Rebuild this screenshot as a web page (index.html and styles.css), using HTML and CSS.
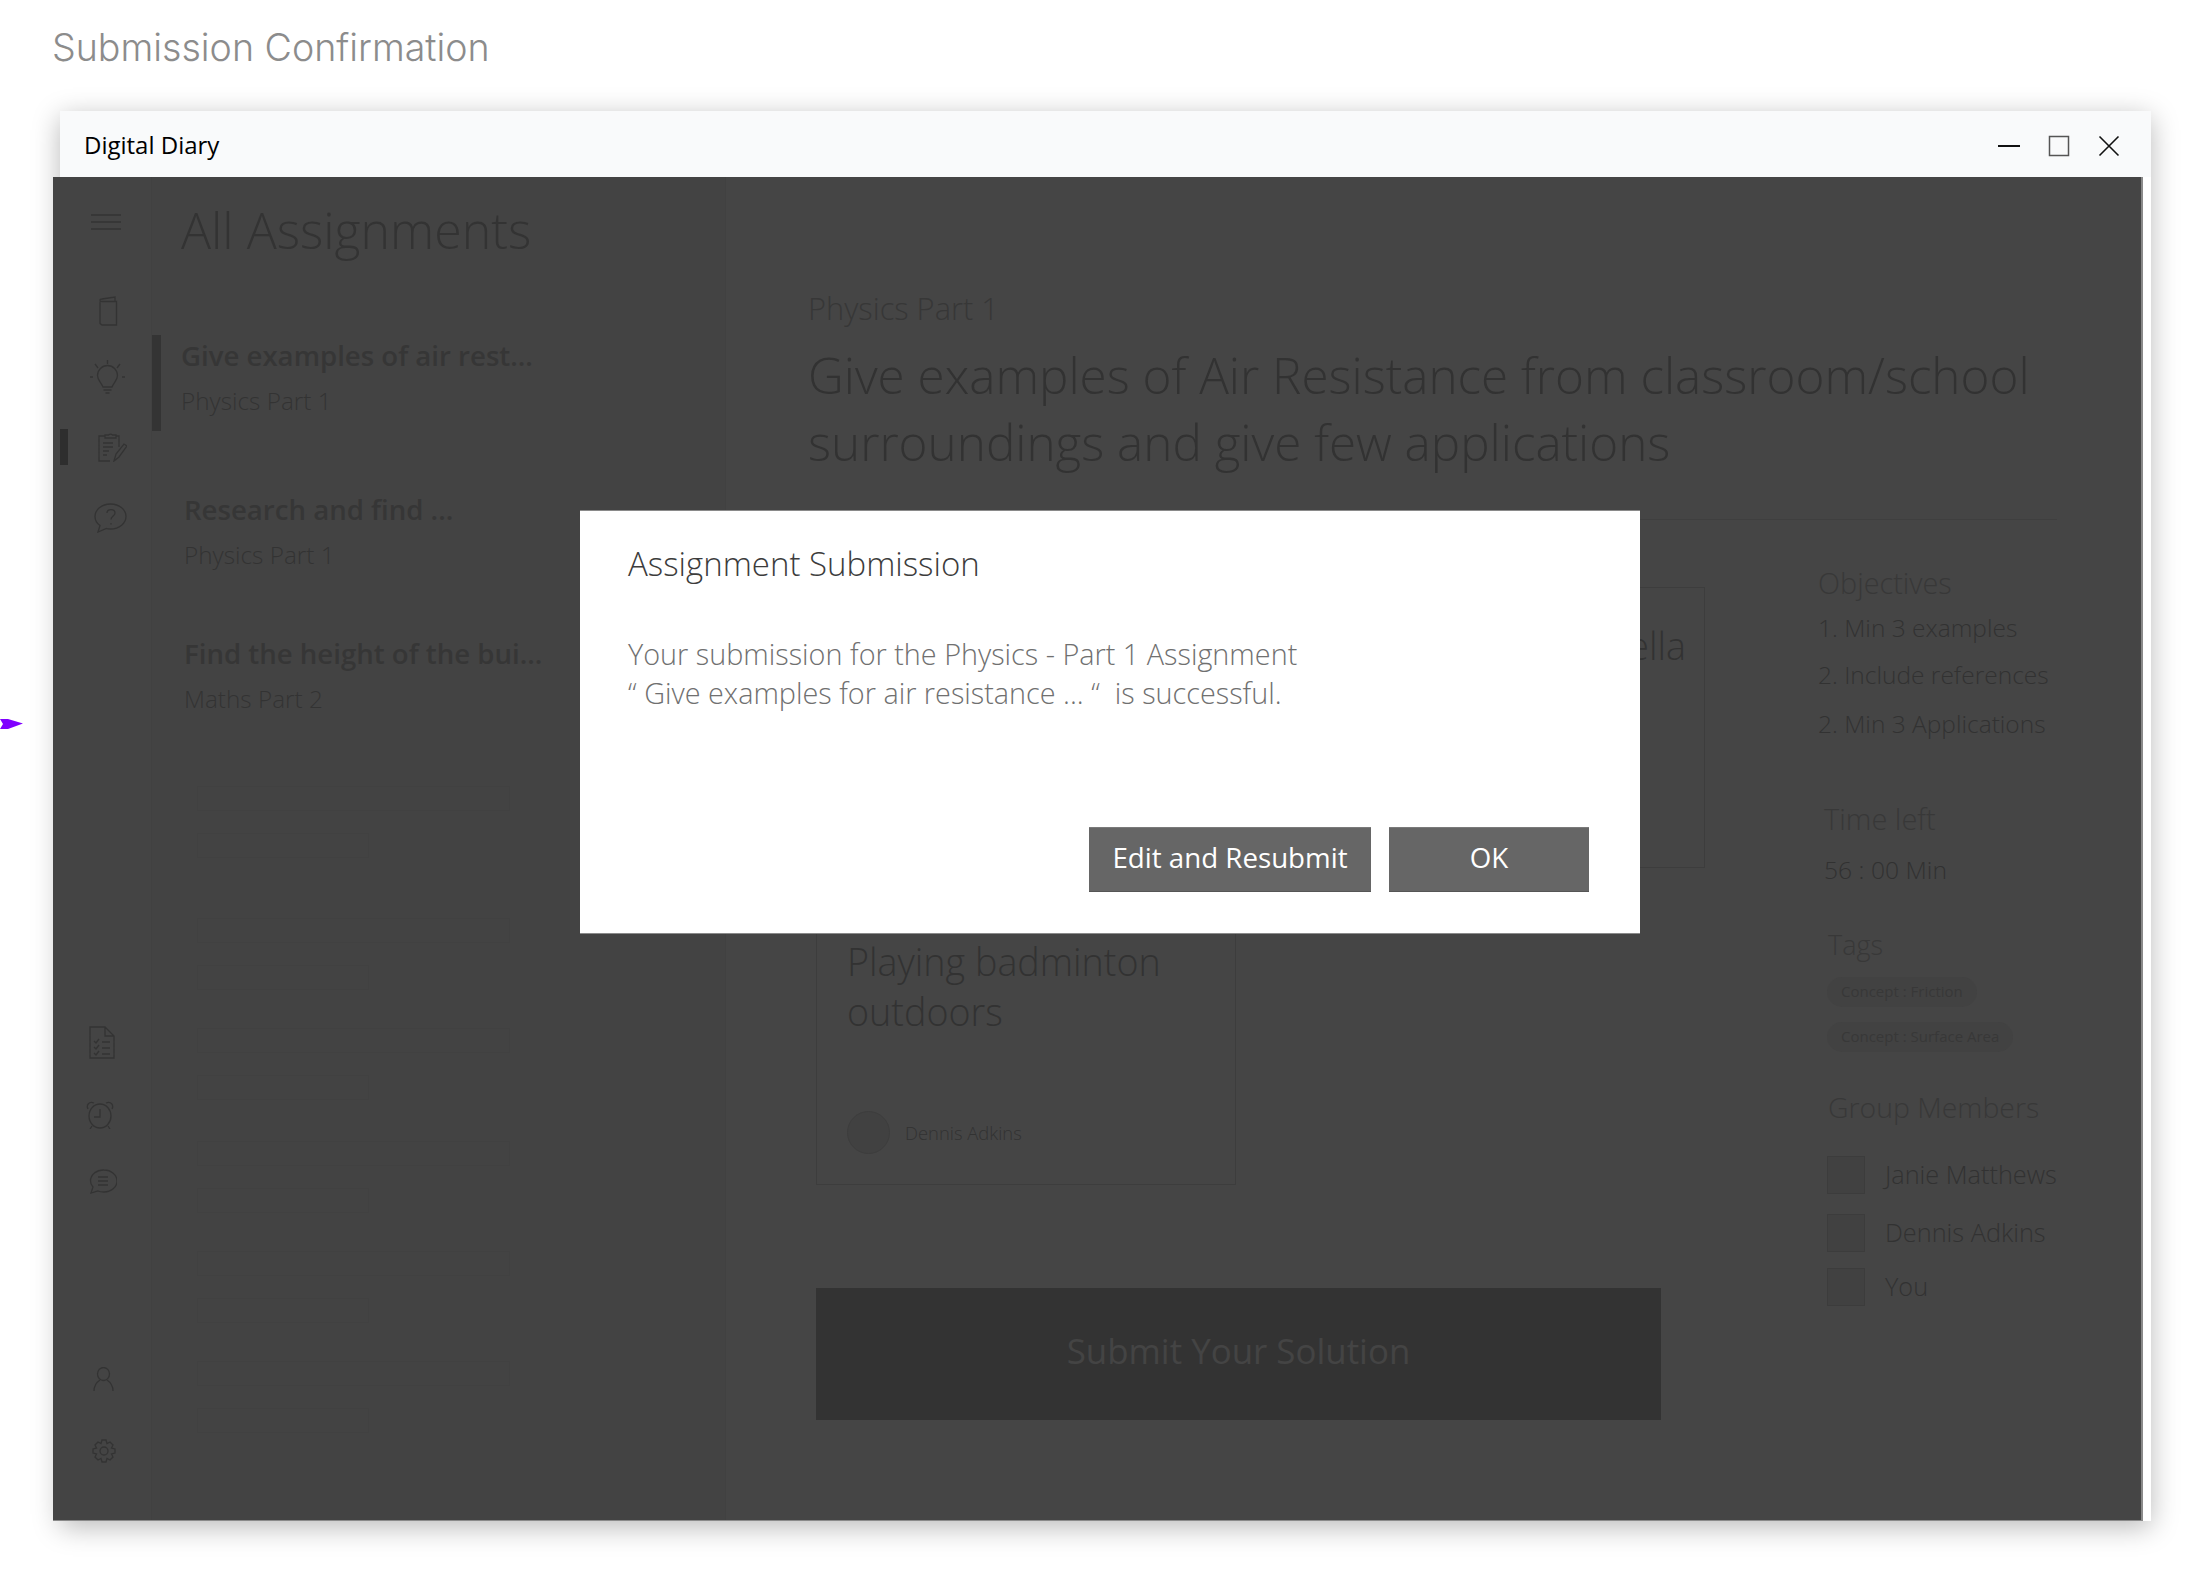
FILE: index.html
```html
<!DOCTYPE html>
<html lang="en">
<head>
<meta charset="utf-8">
<title>Submission Confirmation</title>
<link rel="stylesheet" href="styles.css">
</head>
<body>
<svg class="pointer" viewBox="0 0 23 12"><path d="M0 1 L8 1 L23 5.5 L8 11 L0 11 L3 6 Z"/></svg>
<h1 class="page-title">Submission Confirmation</h1>
<div class="window">
  <header class="titlebar">
    <span class="app-name">Digital Diary</span>
    <div class="controls">
      <svg class="ctl" viewBox="0 0 22 22"><path d="M0 11H22" stroke-width="2"/></svg>
      <svg class="ctl" viewBox="0 0 22 22"><rect x="1.5" y="1.5" width="19" height="19" stroke="#555" stroke-width="1.5"/></svg>
      <svg class="ctl" viewBox="0 0 22 22"><path d="M1.5 1.5L20.5 20.5M20.5 1.5L1.5 20.5" stroke-width="1.6"/></svg>
    </div>
  </header>
  <div class="stage">
    <nav class="rail">
      <svg class="ni ni-ham" viewBox="0 0 30 16"><path d="M0 1H30M0 8H30M0 15H30"/></svg>
      <svg class="ni ni-book" viewBox="0 0 20 30"><path d="M2 5.5V27.5L4 29H18.5V5.5H4C1.5 5.5 1 3 4 3L17 1V5.5"/></svg>
      <svg class="ni ni-bulb" viewBox="0 0 35 35"><path d="M17.5 0V4M5 4L8 8M30 4L27 8M0 17H3M32 17H35M13 27C11 22 7.5 20 7.5 15.5A10 10 0 0 1 27.5 15.5C27.500 20 24 22 22 27ZM13.500 30H21.500M15.500 33H19.500"/></svg>
      <div class="ni-active-wrap">
        <span class="active-mark"></span>
        <svg class="ni ni-clip" viewBox="0 0 29 30"><path d="M7 4H1V29H12M18 4H21V15M7 6V3H10.500A3 3 0 0 1 14.500 3H18V6ZM5 11H15M5 15H15M5 19H11M5 23H9M16 29L18 22L26 12L29 14L21 25Z"/></svg>
      </div>
      <svg class="ni ni-help" viewBox="0 0 33 30"><path d="M16.500 1C7.500 1 1 7 1 13.500C1 17.500 3 20.500 6 22.500L4 29L12.500 25.500C14 26 15 26 16.500 26C25.500 26 32 20 32 13.500C32 7 25.500 1 16.500 1ZM13 10C13 5.500 21 5.500 21 10C21 13 17 13 17 16.500M17 20V21.500"/></svg>
      <svg class="ni ni-doc" viewBox="0 0 26 33"><path d="M1 32V1H16L25 10V32ZM16 1V10H25M5 15L7 17L10 13M13 16H21M5 21L7 23L10 19M13 22H21M5 27L7 29L10 25M13 28H21"/></svg>
      <svg class="ni ni-alarm" viewBox="0 0 28 28"><ellipse cx="14" cy="15" rx="11" ry="12"/><path d="M14 8V16H8M2 8C0 4 3 0 8 2M26 8C28 4 25 0 20 2M6 25L4 28M22 25L24 28"/></svg>
      <svg class="ni ni-chat" viewBox="0 0 28 25"><path d="M15 1A13 11 0 0 1 15 23C12 23 10 22.500 9 22L2 24L4 18C2 16 1.500 14 1.500 12A13 11 0 0 1 15 1ZM9 8H19M9 12H19M9 16H19"/></svg>
      <svg class="ni ni-user" viewBox="0 0 21 24"><ellipse cx="10.500" cy="7" rx="6" ry="6.500"/><path d="M1 24C1 18 4 15 7 13M20 24C20 18 17 15 14 13"/></svg>
      <svg class="ni ni-gear" viewBox="0 0 24 24"><circle cx="12" cy="12" r="4"/><path d="M10 1H14L15 4.500L18 3L21 6L19.500 9L23 10V14L19.500 15L21 18L18 21L15 19.500L14 23H10L9 19.500L6 21L3 18L4.500 15L1 14V10L4.500 9L3 6L6 3L9 4.500Z"/></svg>
    </nav>

    <section class="list">
      <h2 class="list-title">All Assignments</h2>
      <article class="item item-active">
        <h3 class="item-title">Give examples of air rest...</h3>
        <p class="item-sub">Physics Part 1</p>
      </article>
      <article class="item item-two">
        <h3 class="item-title">Research and find ...</h3>
        <p class="item-sub">Physics Part 1</p>
      </article>
      <article class="item item-three">
        <h3 class="item-title">Find the height of the bui...</h3>
        <p class="item-sub">Maths Part 2</p>
      </article>
      <div class="skeletons">
        <div class="skel-pair skel-pair-first"><span class="skel skel-long"></span><span class="skel skel-short"></span></div>
        <div class="skel-pair"><span class="skel skel-long"></span><span class="skel skel-short"></span></div>
        <div class="skel-pair skel-pair-third"><span class="skel skel-long"></span><span class="skel skel-short"></span></div>
        <div class="skel-pair"><span class="skel skel-long"></span><span class="skel skel-short"></span></div>
        <div class="skel-pair"><span class="skel skel-long"></span><span class="skel skel-short"></span></div>
        <div class="skel-pair"><span class="skel skel-long"></span><span class="skel skel-short"></span></div>
      </div>
    </section>

    <main class="detail">
      <p class="subject">Physics Part 1</p>
      <h2 class="headline">Give examples of Air Resistance from classroom/school surroundings and give few applications</h2>
      <div class="divider"></div>
      <div class="detail-body">
        <div class="answers">
          <div class="cards">
            <div class="card"></div>
            <div class="card card-right"><p class="card-text">ella</p></div>
            <div class="card card-tall">
              <p class="card-text">Playing badminton outdoors</p>
              <div class="author"><span class="avatar"></span><span class="author-name">Dennis Adkins</span></div>
            </div>
          </div>
          <div class="submit">Submit Your Solution</div>
        </div>
        <aside class="meta">
          <h4 class="meta-head">Objectives</h4>
          <ol class="objectives">
            <li class="obj">1. Min 3 examples</li>
            <li class="obj">2. Include references</li>
            <li class="obj obj-last">2. Min 3 Applications</li>
          </ol>
          <h4 class="meta-head time-head">Time left</h4>
          <p class="time-value">56 : 00 Min</p>
          <h4 class="meta-head tags-head">Tags</h4>
          <div class="tags">
            <span class="chip">Concept : Friction</span>
            <span class="chip">Concept : Surface Area</span>
          </div>
          <h4 class="group-head">Group Members</h4>
          <div class="members">
            <div class="member"><span class="box"></span><span class="member-name">Janie Matthews</span></div>
            <div class="member member-two"><span class="box"></span><span class="member-name">Dennis Adkins</span></div>
            <div class="member member-three"><span class="box"></span><span class="member-name">You</span></div>
          </div>
        </aside>
      </div>
    </main>

    <div class="dialog" role="dialog">
      <h2 class="dialog-title">Assignment Submission</h2>
      <p class="dialog-body">Your submission for the Physics - Part 1 Assignment<br>&#8220; Give examples for air resistance ... &#8220;&nbsp; is successful.</p>
      <div class="dialog-actions">
        <button class="btn btn-wide">Edit and Resubmit</button>
        <button class="btn btn-ok">OK</button>
      </div>
    </div>
  </div>
</div>
</body>
</html>
```

FILE: styles.css
```css
* { box-sizing: border-box; }
html, body { margin: 0; padding: 0; background: #fff; }
body { position: relative; height: 1574px; overflow: hidden; font-family: "Open Sans", "Noto Sans", sans-serif; }
h1, h2, h3, h4, p, ol { margin: 0; padding: 0; font-weight: 400; }
ol { list-style: none; }

.pointer { position: absolute; left: 0; top: 718px; width: 23px; height: 12px; fill: #8000ff; }
.page-title { font-family: Inter, sans-serif; font-weight: 300; font-size: 37.6px; line-height: 44px; color: #8c8c8c; padding: 26px 0 0 52px; height: 70px; }

.window { margin: 41px 0 0 60px; width: 2091px; height: 1410px; background: #fff; box-shadow: 0 6px 26px rgba(0,0,0,.28); }
.titlebar { height: 66px; background: #f9fafb; display: flex; align-items: center; justify-content: space-between; padding: 2px 31px 0 24px; }
.app-name { font-size: 24px; line-height: 32px; color: #000; }
.controls { display: flex; gap: 28px; margin-top: 2px; }
.ctl { width: 22px; height: 22px; fill: none; stroke: #111; }

.stage { position: relative; margin-left: -7px; width: 2090px; height: 1344px; display: flex; background: #454545; border-right: 2px solid #8a8a8a; border-bottom: 1px solid #8a8a8a; }
.rail { width: 99px; flex: none; display: flex; flex-direction: column; align-items: flex-start; background: #444; border-right: 1px solid #414141; }
.ni { display: block; flex: none; fill: none; stroke: #333; stroke-width: 1.3; }
.ni-ham { width: 30px; height: 16px; margin: 37px 0 0 38px; }
.ni-book { width: 20px; height: 30px; margin: 66px 0 0 45px; }
.ni-bulb { width: 35px; height: 35px; margin: 34px 0 0 37px; }
.ni-active-wrap { position: relative; margin-top: 37px; height: 30px; }
.ni-clip { width: 29px; height: 30px; margin-left: 45px; }
.active-mark { position: absolute; left: 7px; top: -3px; width: 8px; height: 36px; background: #2e2e2e; }
.ni-help { width: 33px; height: 30px; margin: 41px 0 0 41px; }
.ni-doc { width: 26px; height: 33px; margin: 493px 0 0 36px; }
.ni-alarm { width: 28px; height: 28px; margin: 42px 0 0 33px; }
.ni-chat { width: 28px; height: 25px; margin: 40px 0 0 36px; }
.ni-user { width: 21px; height: 24px; margin: 173px 0 0 40px; }
.ni-gear { width: 24px; height: 24px; margin: 48px 0 0 39px; }

.list { width: 574px; flex: none; background: #434343; border-right: 1px solid #414141; }
.list-title { font-weight: 300; font-size: 50px; line-height: 60px; color: #333; margin: 23px 0 0 29px; }
.item { height: 88px; }
.item-active { margin-top: 75px; height: 96px; border-left: 9px solid #343434; padding-left: 20px; }
.item-two { margin: 58px 0 0 32px; }
.item-three { margin: 56px 0 0 32px; }
.item-title { font-weight: 600; font-size: 27.6px; line-height: 40px; color: #363636; white-space: nowrap; }
.item-sub { font-weight: 300; font-size: 24.3px; line-height: 40px; color: #333; margin-top: 6px; }

.skeletons { margin: 65px 0 0 45px; display: flex; flex-direction: column; gap: 38px; }
.skel-pair { display: flex; flex-direction: column; gap: 22px; }
.skel-pair-first { margin-bottom: 22px; }
.skel-pair-third { margin-bottom: 3px; }
.skel { display: block; height: 25px; background: #434343; border: 1px solid #414141; }
.skel-long { width: 313px; }
.skel-short { width: 172px; }

.detail { flex: 1; min-width: 0; padding: 111px 0 0 82px; }
.subject { font-weight: 300; font-size: 30.8px; line-height: 40px; color: #373737; }
.headline { width: 1260px; margin-top: 13px; font-weight: 300; font-size: 49.4px; line-height: 67px; color: #323232; }
.divider { width: 1249px; margin-top: 44px; border-top: 1px solid #3f3f3f; }
.detail-body { display: flex; }
.answers { width: 1010px; flex: none; padding: 67px 0 0 8px; }
.cards { display: grid; grid-template-columns: 420px 420px; grid-template-rows: 281px 285px; gap: 32px 49px; }
.card { border: 1px solid #3d3d3d; padding: 36px 30px 0; }
.card-right { padding: 33px 18px 0; text-align: right; }
.card-text { font-weight: 300; font-size: 37.7px; line-height: 50px; color: #323232; }
.card-tall { grid-column: 1; }
.author { display: flex; align-items: center; gap: 15px; margin-top: 74px; }
.avatar { width: 43px; height: 43px; border-radius: 50%; background: #414141; border: 1px solid #3d3d3d; }
.author-name { font-weight: 300; font-size: 18.4px; line-height: 24px; color: #323232; }
.submit { width: 845px; height: 132px; margin-top: 103px; padding-bottom: 7px; background: #333; color: #444; font-size: 34.9px; display: flex; align-items: center; justify-content: center; }

.meta { padding-top: 45px; flex: none; }
.meta-head { font-weight: 300; font-size: 28.8px; line-height: 36px; color: #383838; }
.obj { font-weight: 300; font-size: 24.5px; line-height: 40px; color: #323232; margin-top: 7px; }
.obj-last { margin-top: 9px; }
.time-head { margin: 57px 0 0 6px; font-size: 29px; }
.time-value { font-weight: 300; font-size: 24.7px; line-height: 40px; color: #313131; margin: 13px 0 0 6px; }
.tags-head { margin: 37px 0 0 10px; font-size: 27px; }
.tags { display: flex; flex-direction: column; align-items: flex-start; gap: 15px; margin: 14px 0 0 9px; }
.chip { height: 30px; padding: 0 14px; border-radius: 15px; background: #424242; font-size: 15px; line-height: 28px; color: #383838; font-weight: 400; }
.group-head { font-weight: 300; font-size: 28.4px; line-height: 40px; color: #383838; margin: 35px 0 0 10px; }
.members { margin: 29px 0 0 9px; }
.member { display: flex; align-items: center; gap: 20px; height: 38px; }
.member-two { margin-top: 20px; }
.member-three { margin-top: 16px; }
.box { width: 38px; height: 38px; background: #414141; border: 1px solid #3c3c3c; }
.member-name { font-weight: 300; font-size: 25.3px; line-height: 34px; color: #323232; padding-bottom: 3px; }

.dialog { position: absolute; left: 527px; top: 333px; width: 1060px; height: 424px; background: #fff; display: flex; flex-direction: column; padding: 34px 51px 41px 48px; border-top: 1px solid #8a8a8a; border-bottom: 1px solid #8a8a8a; }
.dialog-title { font-size: 33px; line-height: 38px; color: #3c3c3c; font-weight: 300; }
.dialog-body { margin-top: 51px; font-size: 28.8px; line-height: 39px; color: #707070; font-weight: 300; }
.dialog-actions { margin-top: auto; display: flex; justify-content: flex-end; gap: 18px; }
.btn { height: 65px; padding: 0 0 6px; border: 0; border-top: 1px solid #7a7a7a; border-bottom: 1px solid #555; background: #666; color: #fff; font-family: inherit; font-size: 27.7px; }
.btn-wide { width: 282px; }
.btn-ok { width: 200px; }
```
